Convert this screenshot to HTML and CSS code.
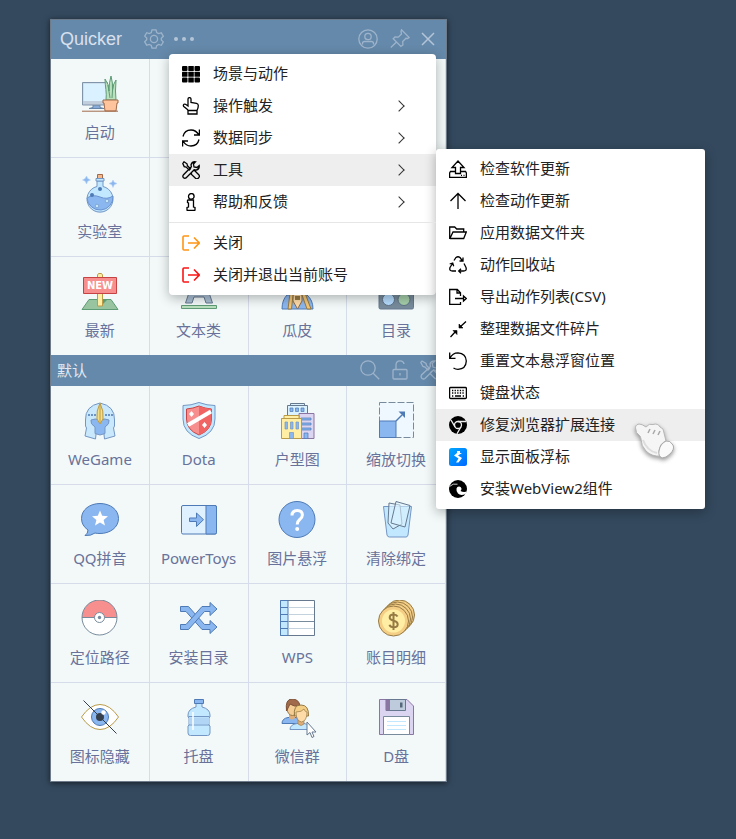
FILE: index.html
```html
<!DOCTYPE html>
<html lang="zh-CN">
<head>
<meta charset="utf-8">
<meta name="viewport" content="width=device-width, initial-scale=1">
<title>Quicker</title>
<link rel="stylesheet" href="styles.css">
</head>
<body>
<main class="panel">
  <header class="titlebar">
    <h1 class="brand">Quicker</h1>
    <button class="bar-btn" aria-label="设置"><svg viewBox="0 0 20 20"><path d="M8 .8h4l.7 2.7 1.9 1.1 2.7-.8 2 3.4-2 2v1.700l2 2-2 3.400-2.700-.8-1.900 1.100L12 19.200H8l-.7-2.700-1.900-1.100-2.700.8-2-3.400 2-2V9.100l-2-2 2-3.400 2.700.9 1.900-1.100z"/><circle cx="10" cy="10" r="3.600"/></svg></button>
    <button class="bar-btn" aria-label="更多"><svg viewBox="0 0 20 20" class="dots"><circle cx="2" cy="10" r="2"/><circle cx="10" cy="10" r="2"/><circle cx="18" cy="10" r="2"/></svg></button>
    <span class="spacer"></span>
    <button class="bar-btn" aria-label="账号"><svg viewBox="0 0 20 20"><circle cx="10" cy="10" r="9.200"/><circle cx="10" cy="7.500" r="3.200"/><path d="M4.500 15.500v-1q0-2 2-2h7q2 0 2 2v1"/></svg></button>
    <button class="bar-btn" aria-label="固定"><svg viewBox="0 0 20 20"><path d="M11.500.8l7.700 7.700-1.700 1-1.500-.2-3.300 3.300.2 3.400-2 1.500-7.700-7.700 1.800-1.800 3.300.2 3.200-3.200-.5-2.500zM6.500 13L.8 18.500"/></svg></button>
    <button class="bar-btn" aria-label="关闭窗口"><svg viewBox="0 0 20 20" class="cross"><path d="M4 4l12 12M16 4L4 16"/></svg></button>
  </header>

  <section class="tiles">
    <button class="tile"><svg viewBox="0 0 40 40"><path d="M9 33.500l4-1V30h7v2.500l4 1z" fill="#86abd8" stroke="#6685a8"/><path d="M2.500 7.500h25V30h-25z" fill="#c2cedb" stroke="#8195aa"/><path d="M3.500 8.500h24V26h-24z" fill="#daf1ff"/><path d="M26 25C27 18 25 11 25 4q4 5 4 12Q29 7 31 1q2 7 1.500 14Q33 9 36 5q-1 12 0 20z" fill="#bae0bd" stroke="#5e9c76"/><path d="M28 10l2 13M33 9l-1 14" fill="none" stroke="#5e9c76"/><path d="M23 25h15v3h-1l-1 8H25l-1-8h-1z" fill="#ffc49c" stroke="#a16a4a"/><path d="M2 36.200h36" stroke="#a16a4a"/></svg><span>启动</span></button>
    <button class="tile"></button>
    <button class="tile"></button>
    <button class="tile"></button>
    <button class="tile"><svg viewBox="0 0 40 40"><path d="M17.500.5h5V5h-5z" fill="#f5b88d" stroke="#a16a4a"/><path d="M17 7v5.500a13 13 0 1 0 6 0V7z" fill="#c2e8ff" stroke="#7496c4"/><path d="M7 24q6-4 13-1t13-1a13 13 0 0 1-26 2z" fill="#8bb7f0" stroke="#6a93cf"/><path d="M16 4.500h8V7h-8z" fill="#c2e8ff" stroke="#7496c4"/><g fill="#4e7ab5"><circle cx="20" cy="15" r="2"/><circle cx="12" cy="21" r="2"/></g><g fill="#c2e8ff" stroke="#7496c4" stroke-width=".7"><circle cx="27" cy="27" r="1.800"/><circle cx="17" cy="32" r="1.800"/></g><path d="M6.500 2l1.200 2.500L10.500 6 7.700 7.200 6.500 10 5.200 7.200 2.500 6l2.700-1.500zM33 6l1.200 2.300L37 9.500l-2.800 1.200L33 13.500l-1.200-2.800L29 9.500l2.800-1.200z" fill="#8bb7f0" stroke="#b3d2f5" stroke-width=".6"/></svg><span>实验室</span></button>
    <button class="tile"></button>
    <button class="tile"></button>
    <button class="tile"></button>
    <button class="tile"><svg viewBox="0 0 40 40"><path d="M9 26.500h22l7 10H2z" fill="#98c4a0" stroke="#5e9c76"/><path d="M22 32l5-5h-5z" fill="#5e9c76"/><path d="M17.500 2l1-1.500h3l1 1.500v31h-5z" fill="#ffeea3" stroke="#ba9b48"/><path d="M3.500 4.500h33v16h-33z" fill="#f78f8f" stroke="#c74343"/><text class="sign-text" x="20" y="16" text-anchor="middle">NEW</text></svg><span>最新</span></button>
    <button class="tile"><svg viewBox="0 0 40 40"><path d="M16 2h8l9.500 28H27l-2-6H15l-2 6H6.500z" fill="#a9bfd3" stroke="#66798f"/><path d="M2.500 32.500h35v3h-35z" fill="#bae0bd" stroke="#5e9c76"/></svg><span>文本类</span></button>
    <button class="tile"><svg viewBox="0 0 40 40"><path d="M5 36q0-9 5-14h20q6 5 6 14z" fill="#8bb7f0" stroke="#4e7ab5"/><path d="M16 8h9v20l-4.500 8L16 28z" fill="#ffdba8" stroke="#8f6c45"/><path d="M13 20l3 2-1.500 14h-3.500zM28 20l-3 2 5 14h4z" fill="#f5c777" stroke="#967a44"/><path d="M18 23h5v4h-5z" fill="#967a44"/></svg><span>瓜皮</span></button>
    <button class="tile"><svg viewBox="0 0 40 40"><rect x="3" y="4" width="34.500" height="32" rx="1.500" fill="#788b9c" stroke="#66798f"/><g stroke="#5f7387"><circle cx="12.500" cy="26.500" r="6" fill="#b6dcfe"/><circle cx="28" cy="26.500" r="6" fill="#a6cfab"/></g></svg><span>目录</span></button>
  </section>

  <header class="groupbar">
    <h2 class="group-name">默认</h2>
    <span class="spacer"></span>
    <button class="bar-btn" aria-label="搜索"><svg viewBox="0 0 20 20"><circle cx="8" cy="8" r="7.200"/><path d="M13.200 13.200l6 6"/></svg></button>
    <button class="bar-btn" aria-label="锁定"><svg viewBox="0 0 20 20"><rect x="3" y="9.500" width="14" height="9.500" rx="1"/><path d="M6 9.500V5q0-4.200 4-4.200 3.500 0 4 3.200M10 13v2.500"/></svg></button>
    <button class="bar-btn" aria-label="编辑"><svg viewBox="0 0 20 20"><path d="M2 1l4 2.500.5 2 3 3-1.500 1.500-3-3-2-.5L.8 2.500zM11.500 11.500l2-1.500 5 5q1 2-1 3.500-2 1-3.500-1l-4-4zM15 1q-4-.5-5 3l.5 2.500L1.500 15q-1 2 .5 3.500 1.500 1 3 0L13.500 10l2.500.5q3.500-1 3-5L16.500 8 13 7l-.8-3.500z"/></svg></button>
  </header>

  <section class="tiles">
    <button class="tile"><svg viewBox="0 0 40 40"><path d="M20 1Q5 4 5.500 18v6l1 2-1.500 8 10.500 3 1-9h7l1 9L35 34l-1.500-8 1-2v-6Q35 4 20 1z" fill="#c9e8fb" stroke="#7496c4"/><path d="M20 18q-5-2-9 0-1 4 4 7v6.500l5 1.500 5-1.500V25q5-3 4-7-4-2-9 0z" fill="#8bb7f0" stroke="#7496c4"/><path d="M20 1q4 8 3 16l-3 5-3-5q-1-8 3-16z" fill="#f5dd83" stroke="#ba9b48"/><path d="M20 2v19" stroke="#ba9b48"/><path d="M8 13h8M25 13h8" stroke="#4e7ab5" stroke-width="1.500" stroke-dasharray="2 1"/></svg><span>WeGame</span></button>
    <button class="tile"><svg viewBox="0 0 40 40"><path d="M20 .5q8 3 16 3V17q0 14-16 19.500Q4 31 4 17V3.500q8 0 16-3z" fill="#c2e8ff" stroke="#7496c4"/><path d="M20 4q6 2.500 12.500 3v10q0 11-12.500 16Q7.500 28 7.500 17V7Q14 6.500 20 4z" fill="#f78f8f" stroke="#c74343"/><path d="M20 4q6 2.500 12.500 3v10q0 11-12.500 16z" fill="#f06464"/><path d="M9 23L32 9.500" stroke="#fff" stroke-width="4"/><path d="M12.500 9l2.500 3-2.500 3-2.500-3zM25.500 20l2.500 3-2.500 3-2.500-3z" fill="#fff"/></svg><span>Dota</span></button>
    <button class="tile"><svg viewBox="0 0 40 40"><path d="M10.500 3.500h3v-2h14v2h3v20h-20z" fill="#daf1ff" stroke="#66798f"/><path d="M12 3.500h17" stroke="#66798f"/><path d="M22 11.500h15v25H22z" fill="#dcd5f2" stroke="#8b75a1"/><path d="M13 6h3v3.500h-3zM18.500 6h3v3.500h-3zM24 6h3v3.500h-3zM24 16h10v2H24zM24 21h10v2H24zM24 26h10v2H24zM27 31h4v5.500h-4z" fill="#8bb7f0" stroke="#4e7ab5" stroke-width=".7"/><path d="M4.500 16.500h2.500v-3h15v3h2.500v20h-20z" fill="#ffeea3" stroke="#ba9b48"/><path d="M4.500 16.500h20" stroke="#ba9b48"/><path d="M8 20h2.500v7H8zM13.500 20H16v7h-2.500zM19 20h2.500v7H19zM12.500 30.500h4v6h-4z" fill="#8bb7f0" stroke="#7496c4" stroke-width=".7"/></svg><span>户型图</span></button>
    <button class="tile"><svg viewBox="0 0 40 40"><path d="M3.500.5h34v35h-34z" fill="#f0f8ff" stroke="#788b9c" stroke-dasharray="7 2"/><path d="M3.500 19h16.500v16.500H3.500z" fill="#8bb7f0" stroke="#4e7ab5"/><path d="M20 19l6-6" stroke="#4e7ab5" stroke-width="1.500"/><path d="M22.500 9.500h6.500V16z" fill="#4e7ab5"/></svg><span>缩放切换</span></button>
    <button class="tile"><svg viewBox="0 0 40 40"><path d="M20 2.500c10 0 18.500 6 18.500 15S30 32.500 20 32.500q-3 0-5-.5-4 3-10 2.500 3-2 3-5.500-6.500-4.500-6.500-11.500c0-9 8.500-15 18.500-15z" fill="#8bb7f0" stroke="#4e7ab5"/><path d="M20 9.500l2.200 5.300 5.800.4-4.400 3.700 1.400 5.600-5-3-5 3 1.400-5.600-4.400-3.700 5.800-.4z" fill="#fff"/></svg><span>QQ拼音</span></button>
    <button class="tile"><svg viewBox="0 0 40 40"><rect x="2.500" y="4.500" width="35" height="28.500" rx="1.500" fill="#dff0fe" stroke="#4e7ab5"/><path d="M27 4.500h9q1.500 0 1.500 1.500v25.500q0 1.500-1.500 1.500h-9z" fill="#8bb7f0" stroke="#4e7ab5"/><path d="M10.500 17h7v-5l7 6.700-7 6.800v-5h-7z" fill="#8bb7f0" stroke="#4e7ab5"/></svg><span>PowerToys</span></button>
    <button class="tile"><svg viewBox="0 0 40 40"><circle cx="20" cy="18.500" r="18" fill="#8bb7f0" stroke="#4e7ab5"/><path d="M15 14.500q0-5 5.200-5t5.200 4.500q0 2.500-2.700 4.500-2.500 2-2.500 5" fill="none" stroke="#fff" stroke-width="3"/><circle cx="20.200" cy="28" r="2" fill="#fff"/></svg><span>图片悬浮</span></button>
    <button class="tile"><svg viewBox="0 0 40 40"><path d="M7.500 5.500h28L32 34q-.5 2-2 2H13.500q-2 0-2.500-2z" fill="#c2e8ff" stroke="#7496c4"/><path d="M13 2l11 2 2 19-9 5-5-6z" fill="#daf1ff" fill-opacity=".7" stroke="#66798f"/><path d="M20 .5l14 4-5 21.500-14-4z" fill="#daf1ff" fill-opacity=".6" stroke="#66798f"/></svg><span>清除绑定</span></button>
    <button class="tile"><svg viewBox="0 0 40 40"><circle cx="19.500" cy="17.500" r="17.500" fill="#fff"/><path d="M2 17.500a17.500 17.500 0 0 1 35 0z" fill="#f78f8f"/><g fill="none" stroke="#788b9c"><circle cx="19.500" cy="17.500" r="17.500"/><path d="M2 17.500h35"/><circle cx="19.500" cy="17.500" r="5" fill="#fff"/></g><circle cx="19.500" cy="17.500" r="1.700" fill="#788b9c"/></svg><span>定位路径</span></button>
    <button class="tile"><svg viewBox="0 0 40 40"><g fill="#8bb7f0" stroke="#4e7ab5"><path d="M1.500 6.500H9.500L25.500 24.500H31v-4l7 6.500-7 6.500v-4H23L7 11.500H1.500z"/><path d="M1.500 24.500H7L23 6.500h8v-4l7 6.500-7 6.500v-4h-5.500l-16 18h-8z"/></g></svg><span>安装目录</span></button>
    <button class="tile"><svg viewBox="0 0 40 40"><path d="M3.500.5h34v35h-34z" fill="#fff" stroke="#66798f"/><path d="M3.500.5H11v35H3.500z" fill="#c2e8ff" stroke="#4e7ab5"/><path d="M3.500 7.500H11M3.500 14.500H11M3.500 21.500H11M3.500 28.500H11" stroke="#4e7ab5"/><path d="M11.500 7.500H37M11.500 14.500H37M11.500 28.500H37" stroke="#c3d2dc"/><path d="M11.500 21.500H37" stroke="#788b9c"/></svg><span>WPS</span></button>
    <button class="tile"><svg viewBox="0 0 40 40"><g fill="#f5ce85" stroke="#967a44"><circle cx="23.500" cy="15" r="15"/><circle cx="21.500" cy="17" r="15"/><circle cx="19.500" cy="19" r="15"/><circle cx="17.500" cy="21" r="15"/></g><circle cx="17.500" cy="21" r="11.500" fill="#ffeea3"/><path d="M21.500 16.500q-1-2-4-2-3.800 0-3.800 3 0 2.300 4 3.300t4 3.500q0 3-4 3-3.500 0-4.200-2.500M17.500 12v18" fill="none" stroke="#967a44" stroke-width="2"/></svg><span>账目明细</span></button>
    <button class="tile"><svg viewBox="0 0 40 40"><path d="M1.500 18Q10 5.500 20 5.500T38.500 18Q30 30.500 20 30.500T1.500 18z" fill="#fff" stroke="#ba9b48"/><circle cx="20" cy="18" r="8.500" fill="#8bb7f0" stroke="#4e7ab5"/><circle cx="20" cy="18" r="4" fill="#36404d"/><circle cx="23.500" cy="13.500" r="2.200" fill="#fff"/><path d="M3.500 1.500l33 33" stroke="#36404d"/></svg><span>图标隐藏</span></button>
    <button class="tile"><svg viewBox="0 0 40 40"><path d="M17 4h6v4q8 2 8 8v2l-1 1v7l1 1v7q0 2.500-2.500 2.500h-17Q9 36.500 9 34v-7l1-1v-7l-1-1v-2q0-6 8-8z" fill="#c2e8ff" stroke="#7496c4"/><path d="M9.500 17.500h21M10 26h20" stroke="#7496c4"/><path d="M10 18.500h20V25H10z" fill="#b0d5f5"/><path d="M15.500.5h9v4h-9z" fill="#8bb7f0" stroke="#4e7ab5"/><path d="M14 13v18" stroke="#fff" stroke-width="1.500"/></svg><span>托盘</span></button>
    <button class="tile"><svg viewBox="0 0 40 40"><path d="M5 24.500q0-5 6-6h8q5 1 6 6z" fill="#8bb7f0" stroke="#4e7ab5"/><path d="M12 13h6v6q-3 3-6 0z" fill="#e0ae7b"/><ellipse cx="15.500" cy="9.500" rx="5.500" ry="7" fill="#f5cd95" stroke="#967a44"/><path d="M9.500 12Q8 0 15 0t8 7q-6 1-10-2z" fill="#a16a4a" stroke="#7f5238"/><path d="M13 30.500q0-5 7-6h7q6 1 7 6z" fill="#c2e8ff" stroke="#7496c4"/><path d="M21 19h6v6q-3 3-6 0z" fill="#e0ae7b" stroke="#967a44" stroke-width=".6"/><path d="M17.500 17Q16 6 24 6t7.500 11z" fill="#f5ce85" stroke="#967a44"/><path d="M19 13q6 0 8-3 1 3 3 3 0 9-5.500 10Q19 22 19 13z" fill="#ffdba8" stroke="#967a44" stroke-width=".7"/><path d="M30 23v13l3-2.500 2 5 2-1-2-4.500h4z" fill="#fff" stroke="#66798f"/></svg><span>微信群</span></button>
    <button class="tile"><svg viewBox="0 0 40 40"><path d="M3.500.5H31l6.500 6.500v28.500h-34z" fill="#dcd5f2" stroke="#8b75a1"/><path d="M10 .5h19.500v11H10z" fill="#bdcbdc" stroke="#66798f"/><path d="M10 .5h4v11h-4z" fill="#8b75a1"/><path d="M24 3.500h2.500v5H24z" fill="#56687b"/><path d="M7.500 17.500h26v18h-26z" fill="#fff" stroke="#788b9c"/><path d="M11 22.500h19M11 26.500h19M11 30.500h19" stroke="#c2e8ff"/></svg><span>D盘</span></button>
  </section>

  <ul class="menu main-menu">
    <li><button class="item"><svg viewBox="0 0 18 18" class="solid"><rect y="1" width="5.500" height="5" rx="1"/><rect x="6.300" y="1" width="5.500" height="5" rx=".5"/><rect x="12.500" y="1" width="5.500" height="5" rx="1"/><rect y="6.700" width="5.500" height="5" rx=".5"/><rect x="6.300" y="6.700" width="5.500" height="5" rx=".5"/><rect x="12.500" y="6.700" width="5.500" height="5" rx=".5"/><rect y="12.400" width="5.500" height="5" rx="1"/><rect x="6.300" y="12.400" width="5.500" height="5" rx=".5"/><rect x="12.500" y="12.400" width="5.500" height="5" rx="1"/></svg><span>场景与动作</span></button></li>
    <li><button class="item"><svg viewBox="0 0 18 18"><path d="M5.500 12.500L1.800 9.500q-1-1.300.2-2.200 1-.6 2 .2L6 9V2q0-1.400 1.500-1.400T9 2v3.500l5.500.8q1.800.4 1.800 2.200 0 2.500-1.300 5H6zM6 13.500h9V17H6z"/></svg><span>操作触发</span><i class="chev"></i></button></li>
    <li><button class="item"><svg viewBox="0 0 18 18"><path d="M1 7.500Q2.500 1 9 1q5 0 8 5M17.400.5V6H12M17 10.500Q15.500 17 9 17q-5 0-8-5M.6 17.500V12H6"/></svg><span>数据同步</span><i class="chev"></i></button></li>
    <li><button class="item active" aria-expanded="true"><svg viewBox="0 0 18 18"><path d="M2 .8l3 2 .5 2 3 3-1.300 1.300-3-3-2-.5L.8 2.500zM10.500 10.500l1.500-1.500 5 5q1 1.500-.5 3t-3 .3L9 13zM13.500.8q-3.500-.3-4.500 3l.4 2L1.300 14q-1 1.500.2 2.700 1.300 1 2.500.2l8.200-8.200 2 .4q3.500-1 3-4.600L15 6.500 12 6l-.5-3z"/></svg><span>工具</span><i class="chev"></i></button>
      <ul class="menu sub-menu">
        <li><button class="item"><svg viewBox="0 0 18 18"><path d="M6.500 13.500V7.500H3L9 1l6 6.500h-3.500v6zM6 11.500H1.500L.6 13v4.400h16.800V13l-.9-1.500H12M12 15.300h1M14.500 15.300h1"/></svg><span>检查软件更新</span></button></li>
        <li><button class="item"><svg viewBox="0 0 18 18"><path d="M9 17V1.500M1.500 9L9 1.500 16.500 9"/></svg><span>检查动作更新</span></button></li>
        <li><button class="item"><svg viewBox="0 0 18 18"><path d="M.7 15V3h5l2 2h7v3M.7 15L4 8h13.300l-2.600 6.500H.7"/></svg><span>应用数据文件夹</span></button></li>
        <li><button class="item"><svg viewBox="0 0 18 18"><path d="M5 4.500L7 1.500Q9 0 11 1.500L13.500 5M14 1.500V5h-3.500M15 7.500l2 4q1 3.500-2.500 3.500H10M12 12.700L9.700 15l2.300 2.300M7 15H3.500Q0 15 1 11.500L3.500 7.500M.7 8l3-1 1 3.200"/></svg><span>动作回收站</span></button></li>
        <li><button class="item"><svg viewBox="0 0 18 18"><path d="M11.500 14v2.400H.7V1.500h7.600l3.200 3.300V8M8 1.500V5h3.500M6 10.500h8M14.500 8l2.800 2.500-2.800 2.500z"/></svg><span>导出动作列表(CSV)</span></button></li>
        <li><button class="item"><svg viewBox="0 0 18 18"><path d="M17 1.500l-6 5.500M1.500 17L7 11"/><path d="M10 4v4h4zM4 10.500h4v4z" fill="currentColor" stroke-width=".6"/></svg><span>整理数据文件碎片</span></button></li>
        <li><button class="item"><svg viewBox="0 0 18 18"><path d="M.7.5v5.800h5.800M1 6Q3.500.8 9 .8q8 .5 8.300 8.200-.3 8-8.300 8.300-2.500 0-4.500-1.300"/></svg><span>重置文本悬浮窗位置</span></button></li>
        <li><button class="item"><svg viewBox="0 0 18 18"><rect x=".6" y="3.500" width="16.800" height="11" rx="1"/><path d="M3 6.500h12M3 9h12" stroke-dasharray="1.300 1.300"/><path d="M3 12h1.300M6 12h6M13.700 12H15"/></svg><span>键盘状态</span></button></li>
        <li><button class="item active"><svg viewBox="0 0 18 18"><circle cx="9" cy="9" r="9" fill="currentColor" stroke="none"/><g stroke="#eee" stroke-width="1.300"><circle cx="9" cy="9" r="3.500"/><path d="M9 5.500h8M12 10.800l-4 7M6 10.800L2 4"/></g></svg><span>修复浏览器扩展连接</span></button></li>
        <li><button class="item"><svg viewBox="0 0 18 18"><defs><linearGradient id="float" x2="1" y2="1"><stop stop-color="#00a8ff"/><stop offset="1" stop-color="#0068ff"/></linearGradient></defs><rect width="18" height="18" rx="2.500" fill="url(#float)" stroke="none"/><path d="M8 3h3v2h2L9 7.500l4 2.500-3.500 4.500H7l2.500-4L5 7.500 8 5z" fill="#fff" stroke="none"/></svg><span>显示面板浮标</span></button></li>
        <li><button class="item"><svg viewBox="0 0 18 18"><circle cx="9" cy="9" r="9" fill="currentColor" stroke="none"/><path d="M.5 6.500Q4 3 8.500 4.200" stroke="#fff" stroke-width=".8"/><path d="M7.500 8.500q.5-2 2.500-2t2.500 2q0 1.500-1 2.500 3 1.500 6.500.5L16.500 14q-5 2-7.500-.5-2-2-1.500-5z" fill="#fff" stroke="none"/></svg><span>安装WebView2组件</span></button></li>
      </ul>
    </li>
    <li><button class="item"><svg viewBox="0 0 18 18"><path d="M6 7h5.500v7l1.500.5V17q0 .5-.5.500h-7Q5 17.500 5 17v-2.500l1.500-.5v-4L5.500 9.500V7.500z"/><circle cx="9.300" cy="3.400" r="2.800"/></svg><span>帮助和反馈</span><i class="chev"></i></button></li>
    <li class="divider"></li>
    <li><button class="item"><svg viewBox="0 0 18 18" class="orange"><path d="M7 2H2Q1 2 1 3v12q0 1 1 1h5M6 9h11M12 3.500L17.300 9 12 14.500"/></svg><span>关闭</span></button></li>
    <li><button class="item"><svg viewBox="0 0 18 18" class="red"><path d="M7 2H2Q1 2 1 3v12q0 1 1 1h5M6 9h11M12 3.500L17.300 9 12 14.500"/></svg><span>关闭并退出当前账号</span></button></li>
  </ul>

  <svg class="pointer" viewBox="6 6 44 46" aria-hidden="true"><path d="M8 15Q6 10 11 9Q14 9 18 12Q21 8 25 9.500Q30 8 32 12Q36 13 36 18Q37 22 38 26Q32 28 31 36Q31 39 33 41Q24 42 18 36Q13 31 13 24Q13 21 10 19Q8 18 8 15z" fill="#f5f5f5" stroke="#b5b5b5"/><path d="M38 26Q42 25 45 30Q47 34 42 39Q38 43 34 43Q30 41 31 36Q32 29 38 26z" fill="#fafafa" stroke="#a8a8a8"/><path d="M22 14l-2 4M27 15l-2 4M32 16l-2 4" fill="none" stroke="#a8a8a8" stroke-width="1.500"/><path d="M15 25q4 11 14 13" fill="none" stroke="#ddd" stroke-width="2"/></svg>
</main>
</body>
</html>
```
FILE: styles.css
```css
* {
  box-sizing: border-box;
}

body {
  margin: 0;
  padding: 19px 50px 57px;
  background: #34495e;
  color: #222;
  font-family: "Noto Sans", "Noto Sans CJK SC", sans-serif;
  font-size: 15px;
  line-height: 20px;
}

button {
  margin: 0;
  border: 0;
  padding: 0;
  background: none;
  color: inherit;
  font: inherit;
}

svg {
  display: block;
  flex: none;
}

.panel {
  position: relative;
  max-width: 397px;
  border: 1px solid #6d7b8b;
  background: #d6dcea;
  box-shadow: 0 1px 6px rgba(0, 0, 0, 0.6);
}

.titlebar,
.groupbar {
  display: flex;
  align-items: center;
  gap: 10px;
  background: #6589aa;
}

.titlebar {
  height: 39px;
  padding: 0 8px 2px 9px;
}

.groupbar {
  height: 31px;
  padding: 0 6px 2px;
}

.brand {
  margin: 0 12px 0 0;
  color: #d8e0ee;
  font: 18px/24px "Liberation Sans", sans-serif;
}

.group-name {
  margin: 0;
  color: #e2e8f1;
  font-size: 15px;
  font-weight: 400;
}

.spacer {
  flex: 1;
}

.bar-btn svg {
  width: 20px;
  height: 20px;
  fill: none;
  stroke: #9db3cb;
  stroke-width: 1.3;
}

.titlebar .bar-btn:nth-of-type(4) {
  margin-left: 2px;
}

.titlebar .bar-btn:last-child {
  margin-left: -2px;
}

.bar-btn .dots {
  fill: #b4c4d8;
  stroke: none;
}

.bar-btn .cross {
  stroke: #b4c4d8;
  stroke-width: 1.5;
}

.tiles {
  display: grid;
  grid-template-columns: repeat(4, 1fr);
  grid-auto-rows: 98px;
  gap: 1px;
  padding-right: 1px;
}

.tile {
  display: flex;
  flex-direction: column;
  align-items: center;
  gap: 7px;
  padding-top: 16px;
  background: #f3f9f9;
  color: #68729a;
  white-space: nowrap;
}

.tile svg {
  width: 40px;
  height: 40px;
}

.sign-text {
  fill: #fff;
  font: bold 10px "DejaVu Sans", sans-serif;
}

.menu {
  position: absolute;
  margin: 0;
  padding: 4px 0;
  border-radius: 4px;
  background: #fff;
  box-shadow: 0 3px 12px rgba(0, 0, 0, 0.3);
  list-style: none;
}

.menu li {
  position: relative;
}

.main-menu {
  top: 34px;
  left: 118px;
  width: 267px;
}

.sub-menu {
  top: -5px;
  left: 100%;
  width: 269px;
  border-radius: 3px;
}

.item {
  display: flex;
  align-items: center;
  gap: 13px;
  width: 100%;
  height: 32px;
  padding: 0 30px 0 13px;
  text-align: left;
  white-space: nowrap;
}

.item.active {
  background: #eee;
}

.item span {
  padding-bottom: 2px;
}

.item svg {
  width: 18px;
  height: 18px;
  color: #000;
  fill: none;
  stroke: currentColor;
  stroke-width: 1.3;
}

.item .solid {
  fill: currentColor;
  stroke: none;
}

.item .orange {
  color: #ff9514;
  stroke-width: 1.6;
}

.item .red {
  color: #fa1414;
  stroke-width: 1.6;
}

.chev {
  width: 8px;
  height: 8px;
  margin-left: auto;
  margin-right: 3px;
  border: solid #333;
  border-width: 1px 1px 0 0;
  transform: rotate(45deg);
}

.divider {
  height: 1px;
  margin: 4px 0;
  background: #e6e6e6;
}

.pointer {
  position: absolute;
  top: 401px;
  left: 583px;
  width: 44px;
  height: 46px;
  filter: drop-shadow(0 2px 2px rgba(0, 0, 0, 0.4));
}
```
